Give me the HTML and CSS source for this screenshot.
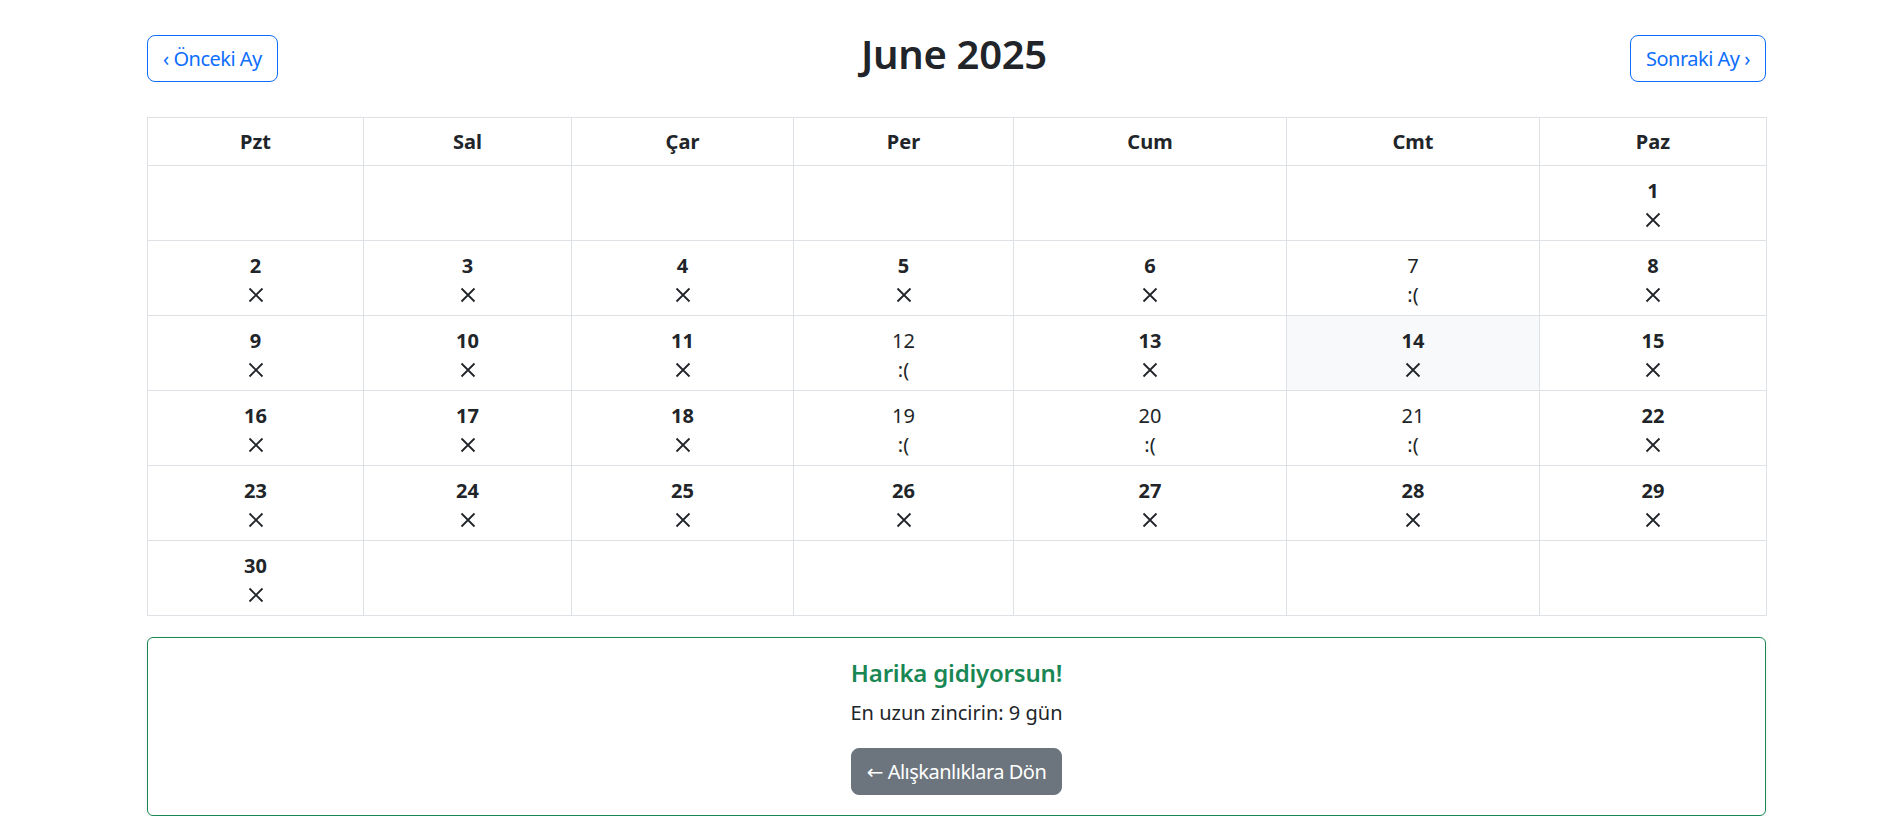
FILE: index.html
```html
<!DOCTYPE html>
<html lang="tr">
<head>
<meta charset="utf-8">
<title>June 2025</title>
<link rel="stylesheet" href="styles.css">
</head>
<body>
<div class="page">
  <div class="month-nav">
    <button class="btn btn-outline">‹ Önceki Ay</button>
    <h1 class="month-title">June 2025</h1>
    <button class="btn btn-outline">Sonraki Ay ›</button>
  </div>

  <table class="cal">
    <thead>
      <tr>
        <th class="c1">Pzt</th><th class="c2">Sal</th><th class="c3">Çar</th><th class="c4">Per</th><th class="c5">Cum</th><th class="c6">Cmt</th><th class="c7">Paz</th>
      </tr>
    </thead>
    <tbody>
      <tr>
        <td></td><td></td><td></td><td></td><td></td><td></td>
        <td><div class="num done">1</div><div class="mark"><svg class="x" viewBox="0 0 16 16"><path d="M1.5 1.5L14.5 14.5M14.5 1.5L1.5 14.5"/></svg></div></td>
      </tr>
      <tr>
        <td><div class="num done">2</div><div class="mark"><svg class="x" viewBox="0 0 16 16"><path d="M1.5 1.5L14.5 14.5M14.5 1.5L1.5 14.5"/></svg></div></td>
        <td><div class="num done">3</div><div class="mark"><svg class="x" viewBox="0 0 16 16"><path d="M1.5 1.5L14.5 14.5M14.5 1.5L1.5 14.5"/></svg></div></td>
        <td><div class="num done">4</div><div class="mark"><svg class="x" viewBox="0 0 16 16"><path d="M1.5 1.5L14.5 14.5M14.5 1.5L1.5 14.5"/></svg></div></td>
        <td><div class="num done">5</div><div class="mark"><svg class="x" viewBox="0 0 16 16"><path d="M1.5 1.5L14.5 14.5M14.5 1.5L1.5 14.5"/></svg></div></td>
        <td><div class="num done">6</div><div class="mark"><svg class="x" viewBox="0 0 16 16"><path d="M1.5 1.5L14.5 14.5M14.5 1.5L1.5 14.5"/></svg></div></td>
        <td><div class="num">7</div><div class="mark sad">:(</div></td>
        <td><div class="num done">8</div><div class="mark"><svg class="x" viewBox="0 0 16 16"><path d="M1.5 1.5L14.5 14.5M14.5 1.5L1.5 14.5"/></svg></div></td>
      </tr>
      <tr>
        <td><div class="num done">9</div><div class="mark"><svg class="x" viewBox="0 0 16 16"><path d="M1.5 1.5L14.5 14.5M14.5 1.5L1.5 14.5"/></svg></div></td>
        <td><div class="num done">10</div><div class="mark"><svg class="x" viewBox="0 0 16 16"><path d="M1.5 1.5L14.5 14.5M14.5 1.5L1.5 14.5"/></svg></div></td>
        <td><div class="num done">11</div><div class="mark"><svg class="x" viewBox="0 0 16 16"><path d="M1.5 1.5L14.5 14.5M14.5 1.5L1.5 14.5"/></svg></div></td>
        <td><div class="num">12</div><div class="mark sad">:(</div></td>
        <td><div class="num done">13</div><div class="mark"><svg class="x" viewBox="0 0 16 16"><path d="M1.5 1.5L14.5 14.5M14.5 1.5L1.5 14.5"/></svg></div></td>
        <td class="today"><div class="num done">14</div><div class="mark"><svg class="x" viewBox="0 0 16 16"><path d="M1.5 1.5L14.5 14.5M14.5 1.5L1.5 14.5"/></svg></div></td>
        <td><div class="num done">15</div><div class="mark"><svg class="x" viewBox="0 0 16 16"><path d="M1.5 1.5L14.5 14.5M14.5 1.5L1.5 14.5"/></svg></div></td>
      </tr>
      <tr>
        <td><div class="num done">16</div><div class="mark"><svg class="x" viewBox="0 0 16 16"><path d="M1.5 1.5L14.5 14.5M14.5 1.5L1.5 14.5"/></svg></div></td>
        <td><div class="num done">17</div><div class="mark"><svg class="x" viewBox="0 0 16 16"><path d="M1.5 1.5L14.5 14.5M14.5 1.5L1.5 14.5"/></svg></div></td>
        <td><div class="num done">18</div><div class="mark"><svg class="x" viewBox="0 0 16 16"><path d="M1.5 1.5L14.5 14.5M14.5 1.5L1.5 14.5"/></svg></div></td>
        <td><div class="num">19</div><div class="mark sad">:(</div></td>
        <td><div class="num">20</div><div class="mark sad">:(</div></td>
        <td><div class="num">21</div><div class="mark sad">:(</div></td>
        <td><div class="num done">22</div><div class="mark"><svg class="x" viewBox="0 0 16 16"><path d="M1.5 1.5L14.5 14.5M14.5 1.5L1.5 14.5"/></svg></div></td>
      </tr>
      <tr>
        <td><div class="num done">23</div><div class="mark"><svg class="x" viewBox="0 0 16 16"><path d="M1.5 1.5L14.5 14.5M14.5 1.5L1.5 14.5"/></svg></div></td>
        <td><div class="num done">24</div><div class="mark"><svg class="x" viewBox="0 0 16 16"><path d="M1.5 1.5L14.5 14.5M14.5 1.5L1.5 14.5"/></svg></div></td>
        <td><div class="num done">25</div><div class="mark"><svg class="x" viewBox="0 0 16 16"><path d="M1.5 1.5L14.5 14.5M14.5 1.5L1.5 14.5"/></svg></div></td>
        <td><div class="num done">26</div><div class="mark"><svg class="x" viewBox="0 0 16 16"><path d="M1.5 1.5L14.5 14.5M14.5 1.5L1.5 14.5"/></svg></div></td>
        <td><div class="num done">27</div><div class="mark"><svg class="x" viewBox="0 0 16 16"><path d="M1.5 1.5L14.5 14.5M14.5 1.5L1.5 14.5"/></svg></div></td>
        <td><div class="num done">28</div><div class="mark"><svg class="x" viewBox="0 0 16 16"><path d="M1.5 1.5L14.5 14.5M14.5 1.5L1.5 14.5"/></svg></div></td>
        <td><div class="num done">29</div><div class="mark"><svg class="x" viewBox="0 0 16 16"><path d="M1.5 1.5L14.5 14.5M14.5 1.5L1.5 14.5"/></svg></div></td>
      </tr>
      <tr>
        <td><div class="num done">30</div><div class="mark"><svg class="x" viewBox="0 0 16 16"><path d="M1.5 1.5L14.5 14.5M14.5 1.5L1.5 14.5"/></svg></div></td>
        <td></td><td></td><td></td><td></td><td></td><td></td>
      </tr>
    </tbody>
  </table>

  <div class="card">
    <h4 class="card-title">Harika gidiyorsun!</h4>
    <p class="card-text">En uzun zincirin: 9 gün</p>
    <button class="btn btn-secondary">← Alışkanlıklara Dön</button>
  </div>
</div>
</body>
</html>
```

FILE: styles.css
```css
* { box-sizing: border-box; }

html, body {
  margin: 0;
  padding: 0;
  background: #fff;
}

body {
  font-family: "Segoe UI", "Noto Sans", "DejaVu Sans", sans-serif;
  color: #212529;
  font-size: 16px;
  line-height: 1.5;
}

.page {
  width: 1619px;
  margin-left: 147px;
  padding-top: 35px;
}

.month-nav {
  display: flex;
  justify-content: space-between;
  align-items: center;
  height: 47px;
  margin-bottom: 35px;
}

.month-title {
  margin: 0 0 9px;
  font-size: 40px;
  line-height: 48px;
  font-weight: 600;
  letter-spacing: -0.3px;
}

.btn {
  font-family: inherit;
  font-size: 20px;
  line-height: 30px;
  height: 47px;
  padding: 0 15px;
  border-radius: 8px;
  border: 1px solid transparent;
  cursor: pointer;
  white-space: nowrap;
  letter-spacing: -0.5px;
}

.btn-outline {
  background: #fff;
  color: #0d6efd;
  border-color: #0d6efd;
}

.btn-secondary {
  background: #6c757d;
  color: #fff;
  border-color: #6c757d;
}

.cal {
  width: 1619px;
  table-layout: fixed;
  border-collapse: collapse;
  font-size: 20px;
  line-height: 30px;
  text-align: center;
}

.cal th, .cal td {
  border: 1px solid #dee2e6;
  vertical-align: top;
}

.cal th {
  padding: 9px 8px 8px;
  font-weight: 700;
}

.cal td {
  padding: 10px 8px 6px;
  height: 75px;
}

.c1 { width: 216px; }
.c2 { width: 208px; }
.c3 { width: 222px; }
.c4 { width: 220px; }
.c5 { width: 273px; }
.c6 { width: 253px; }
.c7 { width: 227px; }

.cal td.today { background: #f8f9fa; }

.num {
  height: 30px;
  font-weight: 400;
}

.num.done { font-weight: 700; }

.mark {
  height: 28px;
  display: flex;
  align-items: center;
  justify-content: center;
  line-height: 28px;
}

.mark.sad { display: block; }

.x {
  width: 16px;
  height: 16px;
  fill: none;
  stroke: #212529;
  stroke-width: 1.8;
  stroke-linecap: butt;
}

.card {
  margin-top: 21px;
  border: 1px solid #198754;
  border-radius: 6px;
  box-shadow: 0 2px 4px rgba(0, 0, 0, 0.075);
  padding: 20px;
  text-align: center;
  display: flex;
  flex-direction: column;
  align-items: center;
}

.card-title {
  margin: 0 0 11px;
  font-size: 24px;
  line-height: 29px;
  font-weight: 600;
  color: #198754;
  letter-spacing: -0.2px;
}

.card-text {
  margin: 0 0 20px;
  font-size: 20px;
  line-height: 30px;
}
```
